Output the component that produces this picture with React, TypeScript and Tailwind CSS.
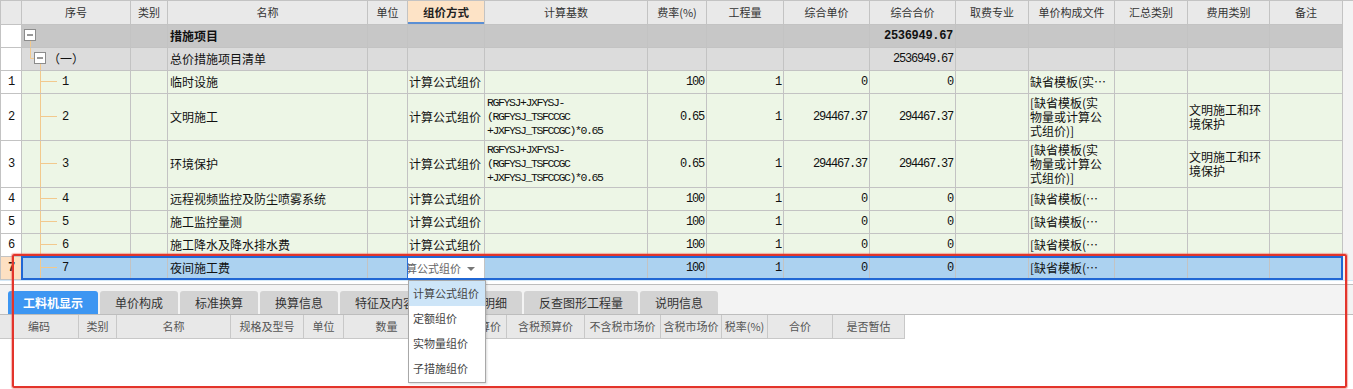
import React from "react";

const GRID =
  "grid grid-cols-[21px_109px_37px_200px_40px_77px_163px_59px_77px_86px_86px_73px_86px_73px_82px_73px]";
const SUB = "grid grid-cols-[79px_38px_114px_73px_40px_86px_77px_78px_76px_61px_46px_65px_72px]";
const MONO = "font-['Liberation_Mono',monospace] tracking-[-1.2px]";
const MONO_SM = "font-['Liberation_Mono',monospace] text-[11.5px] tracking-[-1.4px]";
const LINE = "#f2c98d";

function Cell({ className = "", children }: { className?: string; children?: React.ReactNode }) {
  return (
    <div className={"border-r border-b border-[#c3c3c3] overflow-hidden flex items-center " + className}>
      {children}
    </div>
  );
}

function Box({ x, y }: { x: number; y: number }) {
  return (
    <g>
      <rect x={x} y={y} width={11} height={11} fill="#ffffff" stroke="#8c8c8c" />
      <line x1={x + 2.5} y1={y + 5.5} x2={x + 8.5} y2={y + 5.5} stroke="#333333" />
    </g>
  );
}

function Tree({ kind, h, label }: { kind: "root" | "group" | "child"; h: number; label?: string }) {
  const c = Math.floor(h / 2) - 0.5;
  return (
    <>
      <svg className="absolute left-0 top-0" width={108} height={h}>
        {kind === "root" && (
          <>
            <line x1={8.5} y1={15} x2={8.5} y2={h} stroke={LINE} />
            <Box x={2.5} y={4.5} />
          </>
        )}
        {kind === "group" && (
          <>
            <line x1={8.5} y1={0} x2={8.5} y2={10.5} stroke={LINE} />
            <line x1={8.5} y1={10.5} x2={12} y2={10.5} stroke={LINE} />
            <line x1={18.5} y1={15} x2={18.5} y2={h} stroke={LINE} />
            <Box x={12.5} y={4.5} />
          </>
        )}
        {kind === "child" && (
          <>
            <line x1={18.5} y1={0} x2={18.5} y2={h} stroke={LINE} />
            <line x1={18.5} y1={c} x2={35} y2={c} stroke={LINE} />
          </>
        )}
      </svg>
      {kind === "group" && <span className="relative pl-[26px]">（一）</span>}
      {kind === "child" && <span className={"relative pl-[40px] " + MONO}>{label}</span>}
    </>
  );
}

type Row = {
  n: string;
  name: string;
  base?: string[];
  rate: string;
  up: string;
  tp: string;
  file: string[];
  fee?: string[];
  tall?: boolean;
  sel?: boolean;
};

const ROWS: Row[] = [
  { n: "1", name: "临时设施", rate: "100", up: "0", tp: "0", file: ["缺省模板(实…"] },
  {
    n: "2",
    name: "文明施工",
    base: ["RGFYSJ+JXFYSJ-", "(RGFYSJ_TSFCCGC", "+JXFYSJ_TSFCCGC)*0.65"],
    rate: "0.65",
    up: "294467.37",
    tp: "294467.37",
    file: ["[缺省模板(实", "物量或计算公", "式组价)]"],
    fee: ["文明施工和环", "境保护"],
    tall: true,
  },
  {
    n: "3",
    name: "环境保护",
    base: ["RGFYSJ+JXFYSJ-", "(RGFYSJ_TSFCCGC", "+JXFYSJ_TSFCCGC)*0.65"],
    rate: "0.65",
    up: "294467.37",
    tp: "294467.37",
    file: ["[缺省模板(实", "物量或计算公", "式组价)]"],
    fee: ["文明施工和环", "境保护"],
    tall: true,
  },
  { n: "4", name: "远程视频监控及防尘喷雾系统", rate: "100", up: "0", tp: "0", file: ["[缺省模板(…"] },
  { n: "5", name: "施工监控量测", rate: "100", up: "0", tp: "0", file: ["[缺省模板(…"] },
  { n: "6", name: "施工降水及降水排水费", rate: "100", up: "0", tp: "0", file: ["[缺省模板(…"] },
  { n: "7", name: "夜间施工费", rate: "100", up: "0", tp: "0", file: ["[缺省模板(…"], sel: true },
];

function DataRow({ r }: { r: Row }) {
  const sel = !!r.sel;
  const h = r.tall ? "h-[47px]" : "h-[23px]";
  const bg = sel ? "bg-[#acd2f0]" : "bg-[#edf6e6]";
  return (
    <div className={`${GRID} ${h}`}>
      <Cell className={`justify-center ${sel ? "bg-[#fde0c2] font-bold" : "bg-white"}`}>
        <span className={MONO}>{r.n}</span>
      </Cell>
      <Cell className={`${bg} relative`}>
        <Tree kind="child" h={r.tall ? 46 : 22} label={r.n} />
      </Cell>
      <Cell className={bg} />
      <Cell className={`${bg} pl-[2px] whitespace-nowrap`}>{r.name}</Cell>
      <Cell className={bg} />
      {sel ? (
        <Cell className="bg-white relative border-l border-l-[#2a6fd6] -ml-px">
          <span className="whitespace-nowrap text-[11px] text-[#666] -ml-[13px]">计算公式组价</span>
          <span className="absolute right-[9px] top-[10px] w-0 h-0 border-l-[4px] border-r-[4px] border-t-[4px] border-l-transparent border-r-transparent border-t-[#777]" />
        </Cell>
      ) : (
        <Cell className={`${bg} pl-[1px] whitespace-nowrap`}>计算公式组价</Cell>
      )}
      <Cell className={`${bg} pl-[2px]`}>
        {r.base && (
          <div className={`${MONO_SM} leading-[14px] whitespace-nowrap`}>
            {r.base.map((l) => (
              <div key={l}>{l}</div>
            ))}
          </div>
        )}
      </Cell>
      <Cell className={`${bg} justify-end pr-[2px]`}>
        <span className={MONO}>{r.rate}</span>
      </Cell>
      <Cell className={`${bg} justify-end pr-[2px]`}>
        <span className={MONO}>1</span>
      </Cell>
      <Cell className={`${bg} justify-end pr-[2px]`}>
        <span className={MONO}>{r.up}</span>
      </Cell>
      <Cell className={`${bg} justify-end pr-[2px]`}>
        <span className={MONO}>{r.tp}</span>
      </Cell>
      <Cell className={bg} />
      <Cell className={`${bg} pl-[1px]`}>
        <div className="leading-[14px] whitespace-nowrap">
          {r.file.map((l) => (
            <div key={l}>{l}</div>
          ))}
        </div>
      </Cell>
      <Cell className={bg} />
      <Cell className={`${bg} pl-[1px]`}>
        {r.fee && (
          <div className="leading-[14px] whitespace-nowrap">
            {r.fee.map((l) => (
              <div key={l}>{l}</div>
            ))}
          </div>
        )}
      </Cell>
      <Cell className={bg} />
    </div>
  );
}

const HEAD = [
  "",
  "序号",
  "类别",
  "名称",
  "单位",
  "组价方式",
  "计算基数",
  "费率(%)",
  "工程量",
  "综合单价",
  "综合合价",
  "取费专业",
  "单价构成文件",
  "汇总类别",
  "费用类别",
  "备注",
];

const TABS = ["工料机显示", "单价构成", "标准换算", "换算信息", "特征及内容", "工程量明细", "反查图形工程量", "说明信息"];

const SUBHEAD = [
  "编码",
  "类别",
  "名称",
  "规格及型号",
  "单位",
  "数量",
  "不含税预算价",
  "含税预算价",
  "不含税市场价",
  "含税市场价",
  "税率(%)",
  "合价",
  "是否暂估",
];

export default function App() {
  return (
    <div className="relative w-[1353px] h-[389px] overflow-hidden bg-white text-[12px] text-[#111] font-['Noto_Sans_CJK_SC',sans-serif] leading-none">
      {/* main grid */}
      <div className="flex bg-[#f3f3f3]">
        <div className="w-[1343px] border-l border-t border-[#c3c3c3] bg-white">
          {/* header */}
          <div className={`${GRID} h-[24px]`}>
            {HEAD.map((t, i) =>
              i === 5 ? (
                <Cell
                  key={i}
                  className="justify-center bg-[#fde3c6] font-bold text-[#222] text-[11.5px] shadow-[inset_0_-2px_0_#5b8fd4]"
                >
                  {t}
                </Cell>
              ) : (
                <Cell key={i} className="justify-center bg-[#e9e9e9] text-[11px] text-[#333] whitespace-nowrap">
                  {t}
                </Cell>
              )
            )}
          </div>
          {/* 措施项目 */}
          <div className={`${GRID} h-[23px]`}>
            <Cell className="bg-white" />
            <Cell className="bg-[#c7c7c7] relative">
              <Tree kind="root" h={22} />
            </Cell>
            <Cell className="bg-[#c7c7c7]" />
            <Cell className="bg-[#c7c7c7] pl-[2px] font-bold">措施项目</Cell>
            {Array.from({ length: 6 }).map((_, i) => (
              <Cell key={i} className="bg-[#c7c7c7]" />
            ))}
            <Cell className="bg-[#c7c7c7] justify-end pr-[2px]">
              <span className="font-['Liberation_Mono',monospace] font-bold tracking-[-0.3px]">2536949.67</span>
            </Cell>
            {Array.from({ length: 5 }).map((_, i) => (
              <Cell key={i} className="bg-[#c7c7c7]" />
            ))}
          </div>
          {/* (一) */}
          <div className={`${GRID} h-[23px]`}>
            <Cell className="bg-white" />
            <Cell className="bg-[#dcdcdc] relative">
              <Tree kind="group" h={22} />
            </Cell>
            <Cell className="bg-[#dcdcdc]" />
            <Cell className="bg-[#dcdcdc] pl-[2px]">总价措施项目清单</Cell>
            {Array.from({ length: 6 }).map((_, i) => (
              <Cell key={i} className="bg-[#dcdcdc]" />
            ))}
            <Cell className="bg-[#dcdcdc] justify-end pr-[2px]">
              <span className={MONO}>2536949.67</span>
            </Cell>
            {Array.from({ length: 5 }).map((_, i) => (
              <Cell key={i} className="bg-[#dcdcdc]" />
            ))}
          </div>
          {ROWS.map((r) => (
            <DataRow key={r.n} r={r} />
          ))}
        </div>
        <div className="flex-1 border-t border-[#c3c3c3]" />
      </div>

      {/* bottom panel */}
      <div className="h-[4px] border-t border-[#d3e8f7] bg-white" />
      <div className="h-[31px] border-t border-b border-[#bdbdbd] bg-[#f3f3f3] flex items-end gap-[2px] pl-[8px]">
        {TABS.map((t, i) => (
          <div
            key={t}
            className={
              "h-[23px] px-[15px] flex items-center rounded-t-[3px] whitespace-nowrap text-[12px] " +
              (i === 0 ? "bg-[#3d96f2] text-white font-bold" : "bg-[#d3d3d3] text-[#333]")
            }
          >
            {t}
          </div>
        ))}
      </div>
      <div className={`${SUB} w-[905px] h-[24px]`}>
        {SUBHEAD.map((t) => (
          <div
            key={t}
            className="border-r border-b border-[#c8c8c8] bg-[#e8e8e8] flex items-center justify-center text-[11px] text-[#555] whitespace-nowrap overflow-hidden"
          >
            {t}
          </div>
        ))}
      </div>

      {/* selection outline */}
      <div className="absolute left-[21px] top-[256px] w-[1322px] h-[24px] border-2 border-[#2167d4] pointer-events-none" />

      {/* dropdown */}
      <div className="absolute left-[408px] top-[280px] w-[78px] h-[103px] border border-[#a8a8a8] bg-white text-[11px] text-[#444] shadow-[1px_1px_2px_rgba(0,0,0,0.15)]">
        {["计算公式组价", "定额组价", "实物量组价", "子措施组价"].map((t, i) => (
          <div
            key={t}
            className={"h-[25px] flex items-center pl-[4px] whitespace-nowrap " + (i === 0 ? "bg-[#cde5f8]" : "")}
          >
            {t}
          </div>
        ))}
      </div>

      {/* red annotation frame */}
      <div className="absolute left-[12px] top-[254px] w-[1335px] h-[134px] border-2 border-[#e3342b] rounded-[2px] shadow-[0_0_1px_1px_rgba(240,90,80,0.45)] pointer-events-none" />
    </div>
  );
}
